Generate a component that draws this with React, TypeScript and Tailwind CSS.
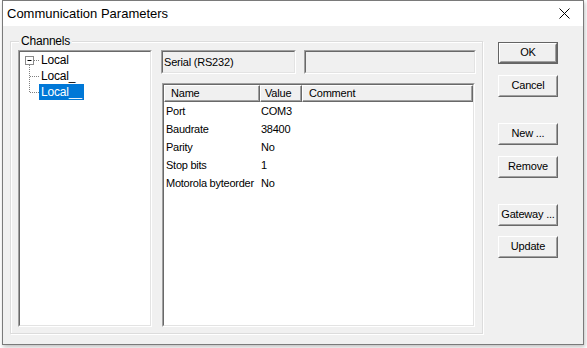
import React from 'react';

const font = { fontFamily: '"Liberation Sans", Arial, sans-serif' };

// classic 3D sunken frame
const Sunken: React.FC<{ className?: string; inner?: string; children?: React.ReactNode }> = ({ className = '', inner = '', children }) => (
  <div className={`border border-t-[#a0a0a0] border-l-[#a0a0a0] border-r-white border-b-white ${className}`}>
    <div className={`h-full w-full border border-t-[#696969] border-l-[#696969] border-r-[#e3e3e3] border-b-[#e3e3e3] ${inner}`}>
      {children}
    </div>
  </div>
);

const Btn: React.FC<{ label: string; def?: boolean; className?: string }> = ({ label, def, className = '' }) => (
  <div className={`w-[60px] h-[22px] ${def ? 'border border-[#646464]' : ''} ${className}`}>
    <div className="h-full w-full border border-t-white border-l-white border-r-[#696969] border-b-[#696969]">
      <div className="h-full w-full flex items-center justify-center border border-t-[#f0f0f0] border-l-[#f0f0f0] border-r-[#a0a0a0] border-b-[#a0a0a0] bg-[#f0f0f0] text-[11px] tracking-[-0.2px] whitespace-nowrap text-black pb-[1px]">
        {label}
      </div>
    </div>
  </div>
);

const HeaderCell: React.FC<{ label: string; w: string; pl: string }> = ({ label, w, pl }) => (
  <div className={`${w} h-[17px] border border-t-white border-l-white border-r-[#696969] border-b-[#696969]`}>
    <div className={`h-full border-r border-b border-[#a0a0a0] bg-[#f0f0f0] flex items-center ${pl} text-[11px] tracking-[-0.2px]`}>
      {label}
    </div>
  </div>
);

const params = [
  ['Port', 'COM3'],
  ['Baudrate', '38400'],
  ['Parity', 'No'],
  ['Stop bits', '1'],
  ['Motorola byteorder', 'No'],
];

const App: React.FC = () => {
  return (
    <div className="w-[587px] h-[348px] bg-white" style={font}>
      {/* Window */}
      <div className="ml-[2px] w-[582px] h-[345px] border border-[#7a7a7a] bg-[#f0f0f0] flex flex-col shadow-[1px_2px_4px_rgba(0,0,0,0.25)]">
        {/* Title bar */}
        <div className="h-[25px] bg-white flex items-center justify-between pl-[4px] pr-[8px]">
          <span className="text-[13px] text-black">Communication Parameters</span>
          <svg width="11" height="11" viewBox="0 0 11 11" className="mr-[5px]">
            <path d="M0.5 0.5 L10.5 10.5 M10.5 0.5 L0.5 10.5" stroke="#000" strokeWidth="1" />
          </svg>
        </div>

        {/* Client area */}
        <div className="flex flex-1 text-black">
          {/* Channels group box */}
          <div className="relative ml-[7px] mt-[15px] w-[473px] h-[293px] border border-[#dcdcdc] shadow-[inset_1px_1px_0_#fff,1px_1px_0_#fff] flex pl-[7px] pt-[8px]">
            <span className="absolute left-[8px] top-[-8px] px-[2px] bg-[#f0f0f0] text-[12px] leading-[14px] tracking-[-0.2px]">Channels</span>

            {/* Tree */}
            <Sunken className="w-[134px] h-[277px]" inner="bg-white relative">
              <svg className="absolute left-0 top-0" width="60" height="100">
                <rect x="5.5" y="4.5" width="8" height="8" fill="#fff" stroke="#8a8a8a" />
                <path d="M7.5 8.5 H11.5" stroke="#000" />
                <path d="M14 8.5 H19 M9.5 13 V40.5 M10 24.5 H19 M10 40.5 H19" stroke="#808080" strokeDasharray="1 1" />
              </svg>
              <div className="relative pl-[19px] text-[12px] leading-[16px] tracking-[-0.2px]">
                <div className="h-[16px]"><span className="inline-block px-[2px]">Local</span></div>
                <div className="h-[16px]"><span className="inline-block px-[2px]">Local_</span></div>
                <div className="h-[16px]"><span className="inline-block px-[2px] bg-[#0078d7] text-white">Local__</span></div>
              </div>
            </Sunken>

            {/* Right side */}
            <div className="ml-[9px] flex flex-col">
              <div className="flex gap-[8px]">
                <Sunken className="w-[135px] h-[24px]" inner="bg-[#f0f0f0] flex items-center pl-[1px] text-[11px] tracking-[-0.2px]">
                  Serial (RS232)
                </Sunken>
                <Sunken className="w-[172px] h-[24px]" inner="bg-[#f0f0f0]" />
              </div>

              <Sunken className="ml-[1px] mt-[9px] w-[313px] h-[244px]" inner="bg-white flex flex-col">
                <div className="flex">
                  <HeaderCell label="Name" w="w-[96px]" pl="pl-[6px]" />
                  <HeaderCell label="Value" w="w-[42px]" pl="pl-[4px]" />
                  <HeaderCell label="Comment" w="w-[171px]" pl="pl-[6px]" />
                </div>
                <div className="text-[11px] tracking-[-0.25px]">
                  {params.map(([name, value]) => (
                    <div key={name} className="flex h-[18px] items-center whitespace-nowrap">
                      <span className="w-[96px] pl-[2px]">{name}</span>
                      <span className="pl-[1px]">{value}</span>
                    </div>
                  ))}
                </div>
              </Sunken>
            </div>
          </div>

          {/* Buttons */}
          <div className="ml-[15px] mt-[16px] flex flex-col">
            <Btn label="OK" def />
            <Btn label="Cancel" className="mt-[11px]" />
            <Btn label="New ..." className="mt-[26px]" />
            <Btn label="Remove" className="mt-[11px]" />
            <Btn label="Gateway ..." className="mt-[26px]" />
            <Btn label="Update" className="mt-[10px]" />
          </div>
        </div>
      </div>
    </div>
  );
};

export default App;
